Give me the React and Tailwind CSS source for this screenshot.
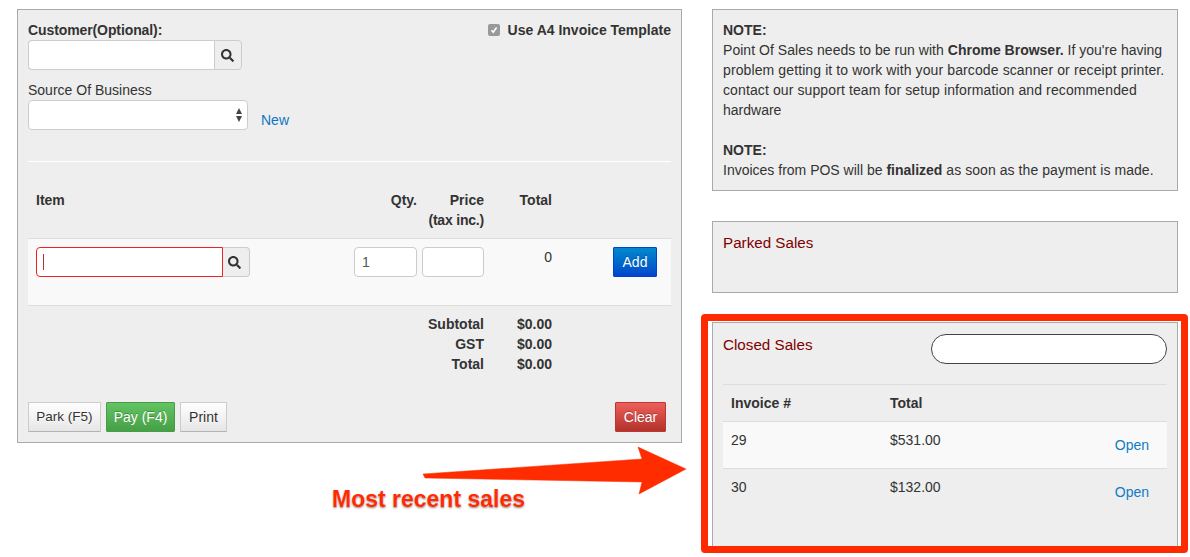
import React from 'react';
import { FaSearch } from 'react-icons/fa';

const closedSales = [
  { id: 29, total: '$531.00', striped: true },
  { id: 30, total: '$132.00', striped: false },
];

const totals = [
  ['Subtotal', '$0.00'],
  ['GST', '$0.00'],
  ['Total', '$0.00'],
];

const inputClass = 'h-[30px] bg-white border border-[#ccc] rounded-[4px] outline-none px-[7px] text-[14px] text-[#555]';
const plainBtn = 'h-[30px] border border-[#ccc] border-b-[#b3b3b3] rounded-[1px] bg-gradient-to-b from-white to-[#e6e6e6] text-[#333] [text-shadow:0_1px_1px_rgba(255,255,255,0.75)]';

const SearchAddon = ({ className }) => (
  <button className={`h-[30px] flex items-center justify-center bg-[#eee] border border-[#ccc] rounded-r-[4px] ${className}`}>
    <FaSearch className="text-[#333] w-[13px] h-[13px]" />
  </button>
);

const App = () => {
  return (
    <div className="relative w-[1190px] h-[557px] overflow-hidden bg-white pt-[9px] pl-[17px] flex gap-[30px] items-start text-[14px] leading-[20px] text-[#333] font-['Liberation_Sans',Arial,sans-serif]">
      {/* Left: sale form */}
      <div className="w-[665px] h-[434px] shrink-0 border border-[#aaa] bg-[#eee] px-[10px] pt-[10px]">
        <div className="flex justify-between">
          <div>
            <div className="font-bold tracking-[-0.1px]">Customer(Optional):</div>
            <div className="flex">
              <input className={`${inputClass} w-[186px] rounded-r-none border-r-0`} />
              <SearchAddon className="w-[28px] pr-[2px]" />
            </div>
          </div>
          <label className="flex items-start font-bold">
            <span className="w-[12px] h-[12px] mt-[4px] mr-[8px] rounded-[2px] bg-[#999] flex items-center justify-center">
              <svg viewBox="0 0 12 12" className="w-[12px] h-[12px]">
                <path d="M3.5 6.2 5.2 8.2 8.6 3.6" fill="none" stroke="#fff" strokeWidth="1.6" />
              </svg>
            </span>
            Use A4 Invoice Template
          </label>
        </div>

        <div className="mt-[10px]">Source Of Business</div>
        <div className="flex items-end">
          <div className={`${inputClass} w-[220px] flex items-center justify-end pr-[5px]`}>
            <svg viewBox="0 0 6 14" className="w-[6px] h-[14px]">
              <path d="M3 0 6 6H0ZM3 14 0 8H6Z" fill="#444" />
            </svg>
          </div>
          <a className="ml-[13px] text-[#0f75c4]">New</a>
        </div>

        <div className="mt-[31px] h-px bg-white" />

        {/* Item table */}
        <div className="flex px-2 pt-[28px] pb-[8px] font-bold">
          <div className="w-[318px]">Item</div>
          <div className="w-[63px] text-right">Qty.</div>
          <div className="w-[62px] ml-[5px] text-right whitespace-nowrap">
            Price
            <br />
            <span className="tracking-[-0.2px]">(tax inc.)</span>
          </div>
          <div className="w-[68px] text-right">Total</div>
        </div>
        <div className="flex px-2 pt-[8px] h-[68px] bg-[#f9f9f9] border-y border-[#ddd] items-start">
          <div className="w-[318px] flex">
            <div className="relative">
              <input className="w-[187px] h-[30px] bg-white border border-[#ee2222] rounded-l-[4px] outline-none" />
              <span className="absolute left-[7px] top-[7px] w-px h-[16px] bg-[#a33]" />
            </div>
            <SearchAddon className="w-[27px] border-l-0 pr-[3px]" />
          </div>
          <input className={`${inputClass} w-[63px]`} defaultValue="1" />
          <input className={`${inputClass} w-[62px] ml-[5px]`} />
          <div className="w-[68px] text-right">0</div>
          <button className="w-[44px] h-[30px] ml-[61px] rounded-[1px] border border-[#04c] bg-gradient-to-b from-[#0088cc] to-[#0044cc] text-white text-[14px] [text-shadow:0_-1px_0_rgba(0,0,0,0.25)]">
            Add
          </button>
        </div>

        <div className="pt-[8px] font-bold">
          {totals.map(([label, value]) => (
            <div key={label} className="flex justify-end w-[524px]">
              <div>{label}</div>
              <div className="w-[68px] text-right">{value}</div>
            </div>
          ))}
        </div>

        <div className="flex mt-[28px] pr-[5px]">
          <button className={`${plainBtn} w-[73px] text-[13.5px]`}>Park (F5)</button>
          <button className="w-[69px] h-[30px] ml-[5px] rounded-[1px] border border-[#4a9a4a] bg-gradient-to-b from-[#62c462] to-[#46a046] text-white text-[14px] [text-shadow:0_-1px_0_rgba(0,0,0,0.25)]">
            Pay (F4)
          </button>
          <button className={`${plainBtn} w-[47px] ml-[5px] text-[14px]`}>Print</button>
          <button className="w-[51px] h-[30px] ml-auto rounded-[1px] border border-[#bd362f] bg-gradient-to-b from-[#ee5f5b] to-[#b3322c] text-white text-[14px] [text-shadow:0_-1px_0_rgba(0,0,0,0.25)]">
            Clear
          </button>
        </div>
      </div>

      {/* Right: notes and sales lists */}
      <div className="w-[466px] shrink-0 flex flex-col">
        <div className="h-[182px] border border-[#aaa] bg-[#eee] px-[10px] pt-[10px]">
          <div className="font-bold">NOTE:</div>
          <div>
            <span className="tracking-[0.04px]">Point Of Sales needs to be run with </span>
            <b>Chrome Browser.</b> If you're having{' '}
            <span className="tracking-[0.11px]">
              problem getting it to work with your barcode scanner or receipt printer. contact our support team for setup information and recommended
            </span>{' '}
            hardware
          </div>
          <div className="font-bold mt-[20px]">NOTE:</div>
          <div>
            Invoices from POS will be <b>finalized</b>
            <span className="tracking-[0.06px]"> as soon as the payment is made.</span>
          </div>
        </div>

        <div className="mt-[30px] h-[72px] border border-[#aaa] bg-[#eee] px-[10px] pt-[10px]">
          <div className="text-[15.2px] leading-[22px] text-[#800000]">Parked Sales</div>
        </div>

        <div className="mt-[29px] h-[225px] border border-[#aaa] bg-[#eee] px-[10px] pt-[11px]">
          <div className="flex justify-between items-start h-[51px] border-b border-[#ddd]">
            <div className="text-[15.2px] leading-[22px] text-[#800000]">Closed Sales</div>
            <input className="w-[236px] h-[30px] bg-white border border-[#444] rounded-full outline-none px-3" />
          </div>
          <div className="flex px-2 pt-[8px] pb-[8px] font-bold">
            <div className="w-[159px]">Invoice #</div>
            <div>Total</div>
          </div>
          {closedSales.map((sale) => (
            <div
              key={sale.id}
              className={`flex h-[47px] px-2 pt-[8px] border-t border-[#ddd] ${sale.striped ? 'bg-[#f9f9f9]' : ''}`}
            >
              <div className="w-[159px]">{sale.id}</div>
              <div>{sale.total}</div>
              <a className="ml-auto mt-[5px] mr-[10px] text-[#0f7cc4]">Open</a>
            </div>
          ))}
        </div>
      </div>

      {/* Annotation drawn over the screenshot */}
      <div className="absolute left-[701px] top-[314px] w-[487px] h-[239px] border-[7px] border-[#ff2a00] rounded-[4px] pointer-events-none" />
      <svg className="absolute left-0 top-0 pointer-events-none" width="1190" height="557">
        <polygon points="423,474 642,459 638,447 686,469 639,494 642,482 425,478" fill="#ff2c00" stroke="#ff2c00" strokeWidth="0.5" strokeLinejoin="round" />
      </svg>
      <div className="absolute left-[332px] top-[486px] text-[23px] leading-[26px] font-bold text-[#ff2a00] whitespace-nowrap [text-shadow:0_0_1px_#fff,0_1px_2px_rgba(0,0,0,0.5)]">
        Most recent sales
      </div>
    </div>
  );
};

export default App;
